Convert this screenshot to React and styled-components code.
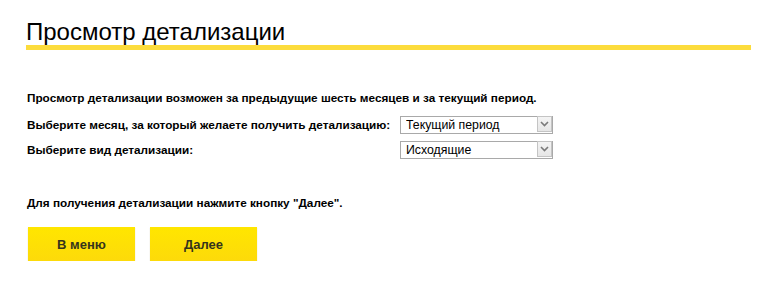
import React from "react";
import styled, { createGlobalStyle } from "styled-components";

const Global = createGlobalStyle`
  html, body { margin: 0; padding: 0; background: #fff; }
  body { font-family: Arial, "Liberation Sans", sans-serif; color: #000; }
`;

const Page = styled.div`
  padding: 0 14px 0 26px;
`;

const Title = styled.h1`
  margin: 0;
  padding-top: 18px;
  font-size: 24px;
  line-height: 27px;
  font-weight: normal;
  color: #000;
  border-bottom: 5px solid #fcdc3c;
`;

const Content = styled.div`
  padding: 40px 1px 0;
`;

const Note = styled.p`
  margin: ${(p) => p.$mt || 0}px 0 0;
  font-size: 11.75px;
  line-height: 16px;
  font-weight: bold;
`;

const Form = styled.div`
  display: flex;
  flex-direction: column;
  gap: 7px;
  margin-top: 9px;
`;

const Row = styled.div`
  display: grid;
  grid-template-columns: 373px 153px;
  align-items: center;
  height: 18px;
`;

const Label = styled.label`
  font-size: 11.75px;
  font-weight: bold;
  line-height: 16px;
  padding-top: 2px;
`;

const SelectWrap = styled.div`
  position: relative;
  height: 18px;
`;

const Select = styled.select`
  appearance: none;
  -webkit-appearance: none;
  box-sizing: border-box;
  width: 100%;
  height: 18px;
  margin: 0;
  padding: 0 20px 0 5px;
  border: 1px solid #a9a9a9;
  border-radius: 0;
  background: #fff;
  font-family: Arial, "Liberation Sans", sans-serif;
  font-size: 12.3px;
  line-height: 16px;
  color: #000;
  outline: none;
`;

const Arrow = styled.span`
  position: absolute;
  top: 1px;
  right: 1px;
  bottom: 1px;
  width: 15px;
  box-sizing: border-box;
  border: 1px solid #c4c4c4;
  background: linear-gradient(#f4f4f4, #e6e6e6);
  display: flex;
  align-items: center;
  justify-content: center;
  pointer-events: none;
`;

const Buttons = styled.div`
  display: flex;
  gap: 15px;
  margin: 16px 0 0 1px;
`;

const Button = styled.button`
  width: 107px;
  height: 34px;
  border: none;
  margin: 0;
  padding: 0;
  background: linear-gradient(#ffe600, #fdda0a);
  box-shadow: 0 1px 1px rgba(120, 100, 0, 0.25);
  font-family: Arial, "Liberation Sans", sans-serif;
  font-size: 13px;
  font-weight: bold;
  color: #35341c;
  cursor: pointer;
`;

const Chevron = () => (
  <svg width="9" height="6" viewBox="0 0 9 6">
    <path d="M1 1 L4.5 4.5 L8 1" fill="none" stroke="#7a7a7a" strokeWidth="1.6" />
  </svg>
);

const Dropdown = ({ options }) => (
  <SelectWrap>
    <Select defaultValue={options[0]}>
      {options.map((o) => (
        <option key={o}>{o}</option>
      ))}
    </Select>
    <Arrow>
      <Chevron />
    </Arrow>
  </SelectWrap>
);

export default function App() {
  return (
    <>
      <Global />
      <Page>
        <Title>Просмотр детализации</Title>
        <Content>
          <Note>Просмотр детализации возможен за предыдущие шесть месяцев и за текущий период.</Note>
          <Form>
            <Row>
              <Label>Выберите месяц, за который желаете получить детализацию:</Label>
              <Dropdown options={["Текущий период"]} />
            </Row>
            <Row>
              <Label>Выберите вид детализации:</Label>
              <Dropdown options={["Исходящие", "Входящие", "Все"]} />
            </Row>
          </Form>
          <Note $mt={37}>Для получения детализации нажмите кнопку "Далее".</Note>
          <Buttons>
            <Button>В меню</Button>
            <Button>Далее</Button>
          </Buttons>
        </Content>
      </Page>
    </>
  );
}
